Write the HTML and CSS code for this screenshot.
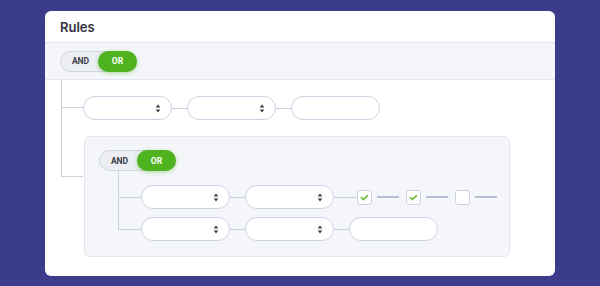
FILE: index.html
```html
<!DOCTYPE html>
<html>
<head>
<meta charset="utf-8">
<link rel="stylesheet" href="styles.css">
</head>
<body>
<div class="card">
  <div class="card-head">Rules</div>
  <div class="toolbar">
    <div class="toggle"><span class="t-and">AND</span><span class="t-or">OR</span></div>
  </div>
  <div class="tree">
    <div class="node node-row">
      <div class="row">
        <div class="select"><svg class="sort" viewBox="0 0 6 10"><path d="M3 0.5 L5.6 4 H0.4 Z M3 9.5 L5.6 6 H0.4 Z" fill="#3a3d47"/></svg></div>
        <span class="link"></span>
        <div class="select"><svg class="sort" viewBox="0 0 6 10"><path d="M3 0.5 L5.6 4 H0.4 Z M3 9.5 L5.6 6 H0.4 Z" fill="#3a3d47"/></svg></div>
        <span class="link"></span>
        <div class="input"></div>
      </div>
    </div>
    <div class="node node-group">
      <div class="group">
        <div class="toggle"><span class="t-and">AND</span><span class="t-or">OR</span></div>
        <div class="subtree">
          <div class="node node-row">
            <div class="row">
              <div class="select"><svg class="sort" viewBox="0 0 6 10"><path d="M3 0.5 L5.6 4 H0.4 Z M3 9.5 L5.6 6 H0.4 Z" fill="#3a3d47"/></svg></div>
              <span class="link"></span>
              <div class="select"><svg class="sort" viewBox="0 0 6 10"><path d="M3 0.5 L5.6 4 H0.4 Z M3 9.5 L5.6 6 H0.4 Z" fill="#3a3d47"/></svg></div>
              <span class="link link-long"></span>
              <div class="check"><svg viewBox="0 0 15 15"><path d="M4 7.6 L6.4 9.8 L11 5.4" fill="none" stroke="#6fbf45" stroke-width="2" stroke-linecap="round" stroke-linejoin="round"/></svg></div>
              <span class="dash"></span>
              <div class="check"><svg viewBox="0 0 15 15"><path d="M4 7.6 L6.4 9.8 L11 5.4" fill="none" stroke="#6fbf45" stroke-width="2" stroke-linecap="round" stroke-linejoin="round"/></svg></div>
              <span class="dash"></span>
              <div class="check"></div>
              <span class="dash"></span>
            </div>
          </div>
          <div class="node node-row">
            <div class="row">
              <div class="select"><svg class="sort" viewBox="0 0 6 10"><path d="M3 0.5 L5.6 4 H0.4 Z M3 9.5 L5.6 6 H0.4 Z" fill="#3a3d47"/></svg></div>
              <span class="link"></span>
              <div class="select"><svg class="sort" viewBox="0 0 6 10"><path d="M3 0.5 L5.6 4 H0.4 Z M3 9.5 L5.6 6 H0.4 Z" fill="#3a3d47"/></svg></div>
              <span class="link"></span>
              <div class="input"></div>
            </div>
          </div>
        </div>
      </div>
    </div>
  </div>
</div>
</body>
</html>
```

FILE: styles.css
```css
* { box-sizing: border-box; }
html, body { margin: 0; padding: 0; }
body {
  background: #3b3d8b;
  font-family: Inter, Roboto, "Liberation Sans", sans-serif;
  width: 600px;
  height: 286px;
  overflow: hidden;
}
.card {
  margin: 11px 0 0 45px;
  width: 510px;
  height: 265px;
  background: #fff;
  border-radius: 6px;
  overflow: hidden;
}
.card-head {
  height: 32px;
  padding: 0 15px;
  display: flex;
  align-items: center;
  font-size: 13px;
  font-weight: 600;
  color: #2f3140;
  border-bottom: 1px solid #e3e6ee;
}
.toolbar {
  height: 37px;
  background: #f5f6fa;
  border-bottom: 1px solid #e3e6ee;
  display: flex;
  align-items: center;
  padding-left: 15px;
}
.toggle {
  display: flex;
  width: 77px;
  height: 21px;
  border-radius: 11px;
  background: #eceef4;
  border: 1px solid #cfd4e3;
  font-family: Roboto, "Liberation Sans", sans-serif;
  font-size: 8.5px;
  font-weight: 700;
}
.t-and {
  flex: 1;
  display: flex;
  align-items: center;
  justify-content: center;
  color: #3a3c48;
  padding-left: 2px;
}
.t-or {
  width: 39px;
  margin: -1px -1px -1px 0;
  display: flex;
  align-items: center;
  justify-content: center;
  color: #fff;
  background: #4fb31f;
  border-radius: 11px;
  box-shadow: 0 1px 4px rgba(79, 179, 31, 0.45);
}
.tree {
  padding-left: 16px;
}
.node {
  position: relative;
  padding-top: var(--gap);
  padding-left: 22px;
  --gap: 16px;
  --mid: 11px;
}
.node-group { --mid: 40px; padding-left: 23px; }
.node::before {
  content: "";
  position: absolute;
  left: 0;
  top: 0;
  bottom: 0;
  border-left: 1px solid #cdd2e1;
}
.node:last-child::before {
  bottom: auto;
  height: calc(var(--gap) + var(--mid));
}
.node::after {
  content: "";
  position: absolute;
  left: 0;
  top: calc(var(--gap) + var(--mid));
  width: 22px;
  border-top: 1px solid #cdd2e1;
}
.row {
  display: flex;
  align-items: center;
  height: 24px;
}
.select, .input {
  width: 89px;
  height: 24px;
  border: 1px solid #cdd2e3;
  border-radius: 12px;
  background: #fff;
  display: flex;
  align-items: center;
  justify-content: flex-end;
  padding-right: 10px;
}
.sort { width: 6px; height: 9px; display: block; }
.link {
  width: 15px;
  border-top: 1px solid #cdd2e1;
}
.link-long { width: 23px; }
.check {
  width: 15px;
  height: 15px;
  border: 1px solid #cdd2e3;
  border-radius: 3px;
  background: #fff;
  flex: none;
}
.check svg { width: 13px; height: 13px; display: block; }
.dash {
  width: 22px;
  height: 2px;
  background: #b7bed6;
  margin: 0 7px 0 5px;
}
.group {
  width: 426px;
  height: 121px;
  background: #f5f6fa;
  border: 1px solid #e3e6ee;
  border-radius: 6px;
  padding: 13px 0 0 14px;
}
.subtree {
  margin-left: 19px;
}
.subtree .node { --gap: 8px; --mid: 12px; padding-left: 23px; }
.subtree .node::after { width: 23px; }
.subtree .node:first-child { --gap: 14px; }
```
